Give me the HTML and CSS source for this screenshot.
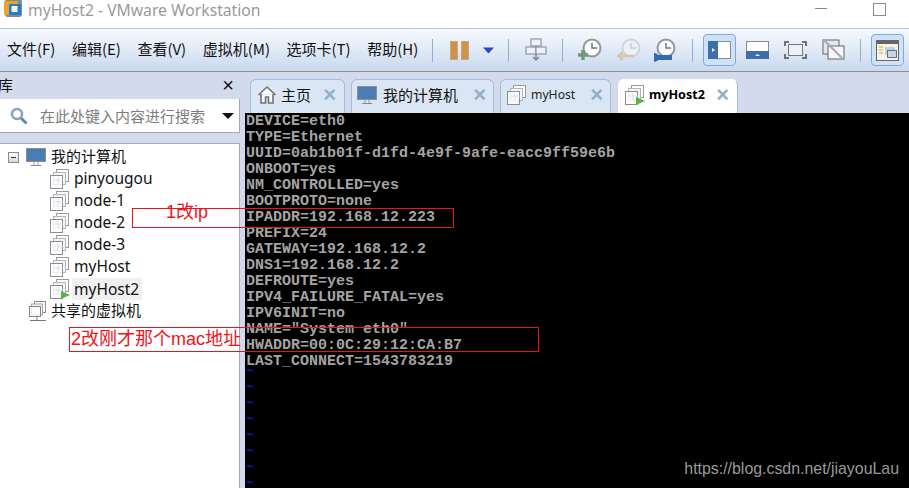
FILE: index.html
```html
<!DOCTYPE html>
<html lang="zh">
<head>
<meta charset="utf-8">
<title>myHost2 - VMware Workstation</title>
<link rel="stylesheet" href="styles.css">
</head>
<body>
<svg class="defs" width="0" height="0" aria-hidden="true">
  <defs>
    <symbol id="vm" viewBox="0 0 22 22">
      <rect x="7.5" y="1.5" width="12" height="12" fill="#fff" stroke="#9a9a9a"/>
      <rect x="4.5" y="4.5" width="12" height="12" fill="#f2f5fb" stroke="#b5b5b5"/>
      <rect x="1.5" y="7.5" width="12" height="13" fill="#fff" fill-opacity=".75" stroke="#8d8d8d"/>
      <path d="M9 9v7M5 12h9" stroke="#d3deee" fill="none"/>
    </symbol>
    <symbol id="pc" viewBox="0 0 20 19">
      <rect x=".5" y=".5" width="19" height="13" fill="#4a7db5" stroke="#8f8f8f"/>
      <path d="M8 14v3M12 14v3" stroke="#999" fill="none"/>
      <path d="M5 17.5h10" stroke="#888" fill="none"/>
    </symbol>
  </defs>
</svg>
<div class="window">
  <header class="titlebar">
    <svg class="app-icon" viewBox="0 0 20 20" width="20" height="20">
      <rect x="2" y="0" width="17" height="18" rx="3" fill="#7e8b9b"/>
      <rect x="1" y="2" width="14" height="14" rx="1" fill="#e8a52a"/>
      <rect x="6" y="5" width="12" height="11" rx="1" fill="#1f7fc4"/>
      <rect x="8.500" y="7" width="6" height="6" fill="#f7f2dc"/>
    </svg>
    <span class="title">myHost2 - VMware Workstation</span>
    <span class="spacer"></span>
    <span class="win-min"></span>
    <span class="win-max"></span>
  </header>

  <nav class="toolbar">
    <div class="menu">
      <span>文件(F)</span><span>编辑(E)</span><span>查看(V)</span><span>虚拟机(M)</span><span>选项卡(T)</span><span>帮助(H)</span>
    </div>
    <i class="sep s1"></i>
    <span class="pause"><b></b><b></b></span>
    <svg class="drop" viewBox="0 0 11 7" width="11" height="7"><path d="M0 .5h11L5.500 6.500z" fill="#2a49c8"/></svg>
    <i class="sep s2"></i>
    <svg class="tool t-net" viewBox="0 0 22 24" width="22" height="24">
      <rect x="6" y="1" width="10" height="7" fill="#eef2f8" stroke="#7c8794"/>
      <rect x="1" y="9" width="10" height="7" fill="#eef2f8" stroke="#7c8794"/>
      <rect x="11" y="9" width="10" height="7" fill="#eef2f8" stroke="#7c8794"/>
      <path d="M11 16v5M8 19l3 3 3-3" stroke="#7c8794" stroke-width="1.500" fill="none"/>
    </svg>
    <i class="sep s3"></i>
    <svg class="tool t-snap" viewBox="0 0 24 24" width="24" height="24">
      <circle cx="14" cy="10" r="8.500" fill="#fbfcfd" stroke="#93989e" stroke-width="2"/>
      <path d="M14 5v5h5" stroke="#6f757c" stroke-width="1.500" fill="none"/>
      <path d="M5 12v10M0 17h10" stroke="#6f9a78" stroke-width="3.500" fill="none"/>
    </svg>
    <svg class="tool t-rev" viewBox="0 0 24 24" width="24" height="24">
      <circle cx="14" cy="10" r="8.500" fill="#eef1f6" stroke="#cfd4da" stroke-width="2"/>
      <path d="M14 5v5h5" stroke="#c6cbd1" stroke-width="1.500" fill="none"/>
      <path d="M1 18h16M6 14l-5 4 5 4" stroke="#d4c7b2" stroke-width="2.500" fill="none"/>
    </svg>
    <svg class="tool t-man" viewBox="0 0 24 24" width="24" height="24">
      <circle cx="14" cy="10" r="8.500" fill="#fbfcfd" stroke="#93989e" stroke-width="2"/>
      <path d="M14 5v5h5" stroke="#6f757c" stroke-width="1.500" fill="none"/>
      <path d="M2 16c3 0 3 2 5 2h12v3H7c-2 0-2 2-5 2" stroke="#2f6db0" stroke-width="2" fill="#2f6db0"/>
    </svg>
    <i class="sep s4"></i>
    <span class="tbtn active b1">
      <svg viewBox="0 0 23 18" width="23" height="18"><rect x=".5" y=".5" width="22" height="17" fill="#fff" stroke="#858b92"/><rect x="0" y="0" width="10" height="18" fill="#3f6fa8"/><path d="M4 7l3 2-3 2z" fill="#fff"/></svg>
    </span>
    <span class="tbtn b2">
      <svg viewBox="0 0 23 18" width="23" height="18"><rect x=".5" y=".5" width="22" height="17" fill="#fff" stroke="#858b92"/><rect x="0" y="10" width="23" height="8" fill="#3f6fa8"/><path d="M9 15l2.500-2 2.500 2z" fill="#fff"/></svg>
    </span>
    <span class="tbtn b3">
      <svg viewBox="0 0 23 18" width="23" height="18"><rect x="4.500" y="3.500" width="14" height="11" fill="#eef2f8" stroke="#777"/><path d="M1 5V1h4M18 1h4v4M22 13v4h-4M5 17H1v-4" stroke="#6d7278" stroke-width="2" fill="none"/></svg>
    </span>
    <span class="tbtn b4">
      <svg viewBox="0 0 23 22" width="23" height="22"><rect x="1" y="1" width="16" height="14" fill="#e3e7ec" stroke="#666"/><rect x="6" y="7" width="16" height="13" fill="#f4f6f9" stroke="#666"/><path d="M1 0l21 21" stroke="#a5abb2" stroke-width="2"/></svg>
    </span>
    <i class="sep s5"></i>
    <span class="tbtn active b5">
      <svg viewBox="0 0 23 21" width="23" height="21"><rect x=".5" y=".5" width="22" height="20" fill="#f6f3e8" stroke="#666"/><rect x="0" y="0" width="23" height="4" fill="#666"/><path d="M3 7h4M3 10h4M3 13h4" stroke="#dca63c" fill="none"/><rect x="9" y="7" width="10" height="8" fill="#b9d3ee"/><rect x="11.500" y="10.500" width="9" height="7" fill="#c9d5e2" stroke="#6a7178"/></svg>
    </span>
  </nav>

  <div class="main">
    <aside class="side">
      <div class="lib-head"><span class="lib-title">库</span><span class="lib-close">×</span></div>
      <div class="search">
        <svg viewBox="0 0 18 18" width="18" height="18"><circle cx="7" cy="7" r="5" fill="#fff" stroke="#8ba2bd" stroke-width="2.500"/><path d="M11 11l5.500 5.500" stroke="#6d87a3" stroke-width="3"/></svg>
        <span class="search-text">在此处键入内容进行搜索</span>
        <span class="search-drop"></span>
      </div>
      <div class="tree">
        <div class="row root">
          <span class="toggle"></span>
          <svg class="i-pc" width="20" height="19"><use href="#pc"/></svg>
          <span class="cjk">我的计算机</span>
        </div>
        <div class="row vm"><svg width="22" height="22"><use href="#vm"/></svg><span>pinyougou</span></div>
        <div class="row vm"><svg width="22" height="22"><use href="#vm"/></svg><span>node-1</span></div>
        <div class="row vm"><svg width="22" height="22"><use href="#vm"/></svg><span>node-2</span></div>
        <div class="row vm"><svg width="22" height="22"><use href="#vm"/></svg><span>node-3</span></div>
        <div class="row vm"><svg width="22" height="22"><use href="#vm"/></svg><span>myHost</span></div>
        <div class="row vm cur">
          <span class="vm-run"><svg width="22" height="22"><use href="#vm"/></svg><i class="play"></i></span>
          <span class="sel">myHost2</span>
        </div>
        <div class="row shared">
          <svg viewBox="0 0 20 22" width="20" height="22"><rect x="6.500" y="1.500" width="11" height="11" fill="#fff" stroke="#8d8d8d"/><rect x="3.500" y="4" width="11" height="11" fill="#f2f5fb" stroke="#a5a5a5"/><rect x="1.500" y="6.500" width="11" height="10" fill="#fff" fill-opacity=".75" stroke="#858585"/><path d="M9 16v4M2 20.500h16" stroke="#777" fill="none"/></svg>
          <span class="cjk">共享的虚拟机</span>
        </div>
      </div>
    </aside>

    <section class="work">
      <div class="tabs">
        <div class="tab t-home">
          <svg viewBox="0 0 20 20" width="20" height="20"><path d="M1.500 10L10 2l8.500 8M4 9v9h4.500v-6h3v6H16V9" fill="#fff" stroke="#6e7378" stroke-width="1.600"/></svg>
          <span class="tab-name">主页</span><span class="x">×</span>
        </div>
        <div class="tab t-pc">
          <svg width="20" height="19"><use href="#pc"/></svg>
          <span class="tab-name">我的计算机</span><span class="x">×</span>
        </div>
        <div class="tab t-vm">
          <svg width="22" height="22"><use href="#vm"/></svg>
          <span class="tab-vm">myHost</span><span class="x">×</span>
        </div>
        <div class="tab t-act">
          <span class="vm-run"><svg width="22" height="22"><use href="#vm"/></svg><i class="play"></i></span>
          <span class="tab-vm strong">myHost2</span><span class="x">×</span>
        </div>
      </div>
      <div class="term">
<pre class="screen">DEVICE=eth0
TYPE=Ethernet
UUID=0ab1b01f-d1fd-4e9f-9afe-eacc9ff59e6b
ONBOOT=yes
NM_CONTROLLED=yes
BOOTPROTO=none
IPADDR=192.168.12.223
PREFIX=24
GATEWAY=192.168.12.2
DNS1=192.168.12.2
DEFROUTE=yes
IPV4_FAILURE_FATAL=yes
IPV6INIT=no
NAME="System eth0"
HWADDR=00:0C:29:12:CA:B7
LAST_CONNECT=1543783219</pre>
        <div class="tilde">~</div><div class="tilde">~</div><div class="tilde">~</div><div class="tilde">~</div><div class="tilde">~</div><div class="tilde">~</div><div class="tilde">~</div><div class="tilde">~</div>
        <span class="mark">https://blog.csdn.net/jiayouLau</span>
      </div>
    </section>
  </div>

  <div class="note n1"><span>1改ip</span></div>
  <div class="note n2"><span>2改刚才那个mac地址</span></div>
</div>
</body>
</html>
```
FILE: styles.css
```css
* { box-sizing: border-box; }
html, body { margin: 0; padding: 0; }
body { width: 909px; height: 488px; overflow: hidden; background: #fff; font-family: "Noto Sans", "Noto Sans CJK SC", sans-serif; }
.defs { display: block; height: 0; }
.window { position: relative; width: 909px; height: 488px; display: flex; flex-direction: column; overflow: hidden; }

.titlebar { height: 28px; display: flex; align-items: center; background: #fff; padding-left: 3px; padding-bottom: 9px; flex: none; }
.app-icon { flex: none; margin-top: -1px; }
.title { margin-left: 5px; font-size: 15.7px; color: #9a9a9a; white-space: nowrap; line-height: 18px; margin-top: 1px; }
.spacer { flex: 1; }
.win-min { width: 12px; height: 1px; background: #8a8a8a; margin-top: -2px; }
.win-max { width: 13px; height: 13px; border: 1px solid #8a8a8a; margin-left: 46px; margin-right: 23px; margin-top: -1px; }

.toolbar { height: 44px; display: flex; align-items: center; flex: none; border-top: 1px solid #a6c6e6; border-bottom: 1px solid #8f8f8f; background: linear-gradient(#f6f9fd, #e7eff9 35%, #c9d9ee); padding-left: 7px; position: relative; }
.menu { display: flex; gap: 16.500px; font: 15px/20px "Noto Sans CJK SC", "Noto Sans", sans-serif; color: #111; white-space: nowrap; width: 411px; flex: none; margin-top: -2px; }
.sep { display: block; width: 1px; height: 23px; background: #8fb0d2; flex: none; }
.s1 { margin-left: 14px; }
.pause { display: flex; gap: 3px; margin-left: 17px; flex: none; }
.pause b { display: block; width: 8px; height: 19px; background: #d09247; border: 1px solid #c7a680; }
.drop { margin-left: 14px; flex: none; }
.s2 { margin-left: 14px; }
.tool { flex: none; }
.t-net { margin-left: 16px; }
.s3 { margin-left: 15px; }
.t-snap { margin-left: 15px; }
.t-rev { margin-left: 15px; }
.t-man { margin-left: 11px; }
.s4 { margin-left: 16px; }
.tbtn { display: flex; align-items: center; justify-content: center; flex: none; width: 23px; height: 32px; }
.tbtn.active { width: 33px; border: 1px solid #7fabdc; border-radius: 4px; background: #cfe2f7; }
.b1 { margin-left: 10px; }
.b2 { margin-left: 10px; }
.b3 { margin-left: 15px; }
.b4 { margin-left: 15px; }
.s5 { margin-left: 15px; }
.b5 { margin-left: 10px; }

.main { flex: 1; display: flex; background: #d3daec; min-height: 0; }
.side { width: 240px; flex: none; display: flex; flex-direction: column; }
.lib-head { height: 27px; display: flex; align-items: center; justify-content: space-between; padding-right: 6px; }
.lib-title { font: 15px/18px "Noto Sans CJK SC", sans-serif; color: #111; margin-left: -2px; margin-top: -2px; }
.lib-close { font: 20px/20px "Liberation Sans", sans-serif; color: #111; margin-top: -2px; }
.search { height: 34px; background: #fff; display: flex; align-items: center; border-right: 1px solid #a8a8a8; border-bottom: 1px solid #a8a8a8; padding-left: 10px; }
.search-text { font: 15px/20px "Noto Sans CJK SC", sans-serif; color: #7d7d7d; margin-left: 12px; white-space: nowrap; }
.search-drop { width: 0; height: 0; border-left: 6px solid transparent; border-right: 6px solid transparent; border-top: 6px solid #111; margin-left: 17px; }
.tree { flex: 1; margin-top: 10px; background: #fff; border-top: 1px solid #a8a8a8; border-right: 1px solid #a8a8a8; padding-top: 2px; }
.row { height: 22px; display: flex; align-items: center; font-size: 15.500px; color: #111; white-space: nowrap; }
.row > span:last-child { margin-top: -2px; }
.cjk { font: 15px/20px "Noto Sans CJK SC", sans-serif; }
.root { padding-left: 8px; }
.toggle { width: 11px; height: 11px; border: 1px solid #8a8a8a; background: linear-gradient(#fff, #d8d8d8); position: relative; flex: none; }
.toggle::after { content: ""; position: absolute; left: 2px; top: 4px; width: 5px; height: 1px; background: #333; }
.i-pc { margin-left: 7px; margin-right: 5px; flex: none; }
.vm { padding-left: 49px; }
.vm > svg { flex: none; }
.vm > span:last-child { margin-left: 3px; }
.vm-run { position: relative; display: block; width: 22px; height: 22px; flex: none; }
.vm-run svg { display: block; }
.play { position: absolute; left: 12px; top: 13px; width: 0; height: 0; border-left: 9px solid #55b545; border-top: 4.500px solid transparent; border-bottom: 4.500px solid transparent; }
.sel { background: #f0f0f0; padding: 0 3px 0 2px; line-height: 22px; height: 22px; margin-left: 1px !important; margin-top: -1px !important; }
.shared { padding-left: 28px; }
.shared .cjk { margin-left: 3px; }

.work { flex: 1; min-width: 0; margin-left: 5px; display: flex; flex-direction: column; }
.tabs { height: 41px; flex: none; display: flex; align-items: flex-end; padding-left: 5px; gap: 6px; }
.tab { height: 34px; display: flex; align-items: center; background: #dbe6f4; border: 1px solid #a3bcd8; border-bottom: 0; border-radius: 6px 6px 0 0; padding: 0 0 3px 6px; flex: none; }
.tab-name { font: 15px/20px "Noto Sans CJK SC", sans-serif; color: #111; margin-left: 5px; }
.t-home .tab-name { margin-left: 4px; }
.tab-vm { font: 12.200px/18px "Noto Sans", sans-serif; color: #222; margin-left: 3px; }
.strong { font-size: 12.600px; font-weight: 700; color: #000; margin-left: 3px; }
.x { font: 22px/20px "Liberation Sans", sans-serif; color: #8fb0cc; margin-left: auto; margin-right: 8px; font-weight: 700; }
.t-home { width: 95px; }
.t-pc { width: 143px; }
.t-pc svg { margin-left: -1px; }
.t-pc .tab-name { margin-left: 6px; }
.t-pc .x { margin-right: 7px; }
.t-vm { width: 111px; }
.t-vm .x { margin-right: 7px; }
.t-vm svg, .t-act .vm-run { margin-left: -1px; }
.t-act { width: 120px; background: #fff; border-color: #fff; border-right-color: #a3bcd8; margin-left: 1px; }

.term { position: relative; flex: 1; background: #000; min-height: 0; overflow: hidden; padding: 1px 0 0 1px; }
.screen { margin: 0; font: 700 15px/16px "Liberation Mono", "DejaVu Sans Mono", monospace; color: #a4a4a4; }
.tilde { height: 16px; font: 700 13px/4px "Liberation Mono", monospace; color: #1414c8; }
.mark { position: absolute; right: 10px; bottom: 9px; font: 15.900px/20px "Liberation Sans", sans-serif; color: #9a9a9a; }

.note { position: absolute; border: 1px solid #e8141c; color: #f0141c; font: 18px/22px "Liberation Sans", "Noto Sans CJK SC", sans-serif; white-space: nowrap; }
.n1 { left: 132px; top: 208px; width: 322px; height: 20px; padding-left: 33px; }
.n1 span { display: block; margin-top: -8px; }
.n2 { left: 69px; top: 327px; width: 470px; height: 25px; padding-left: 1px; }
```
